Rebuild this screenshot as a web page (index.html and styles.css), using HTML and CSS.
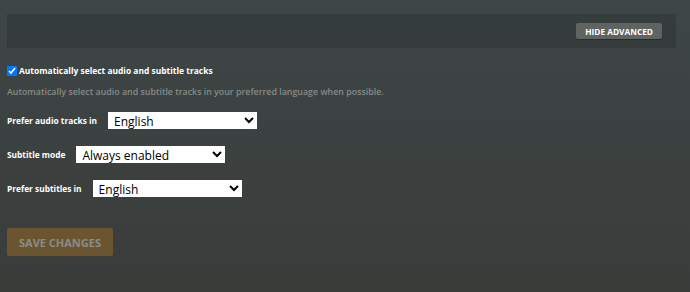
FILE: index.html
```html
<!DOCTYPE html>
<html lang="en">
<head>
  <meta charset="UTF-8" />
  <title>Language settings</title>
  <link rel="stylesheet" href="styles.css">
</head>
<body>
  <div class="page">
    <div class="toolbar">
      <button class="btn-advanced">HIDE ADVANCED</button>
    </div>

    <form class="settings">
      <label class="check-row">
        <input type="checkbox" checked />
        <span>Automatically select audio and subtitle tracks</span>
      </label>
      <p class="help">Automatically select audio and subtitle tracks in your preferred language when possible.</p>

      <div class="field">
        <label for="audio-lang">Prefer audio tracks in</label>
        <select id="audio-lang">
          <option>English</option>
        </select>
      </div>

      <div class="field">
        <label for="sub-mode">Subtitle mode</label>
        <select id="sub-mode">
          <option>Always enabled</option>
        </select>
      </div>

      <div class="field">
        <label for="sub-lang">Prefer subtitles in</label>
        <select id="sub-lang">
          <option>English</option>
        </select>
      </div>

      <button type="button" class="btn-save">SAVE CHANGES</button>
    </form>
  </div>
</body>
</html>
```

FILE: styles.css
```css
html, body {
  height: 100%;
}

body {
  margin: 0;
  background: linear-gradient(180deg, #3e4646 0%, #3b403f 60%, #3a3c3a 100%);
  color: #fff;
  font-family: "Open Sans", sans-serif;
  overflow: hidden;
}

.page {
  padding: 14px 14px 0 7px;
}

.toolbar {
  display: flex;
  justify-content: flex-end;
  align-items: center;
  height: 34px;
  padding: 0 14px 0 0;
  background: rgba(0, 0, 0, 0.12);
}

.btn-advanced {
  height: 16px;
  padding: 0 9px;
  border: none;
  border-radius: 2px;
  background: #5f6463;
  color: #fff;
  font-family: "Open Sans", sans-serif;
  font-weight: 700;
  font-size: 8.3px;
  box-shadow: 0 1px 1px rgba(0, 0, 0, 0.3);
}

.settings {
  display: flex;
  flex-direction: column;
  align-items: flex-start;
}

.check-row {
  display: flex;
  align-items: center;
  gap: 2px;
  margin-top: 17px;
  font-size: 8.45px;
  font-weight: 700;
}

.check-row input {
  width: 10px;
  height: 10px;
  margin: 0;
}

.help {
  margin: 10px 0 0;
  font-size: 8.85px;
  font-weight: 600;
  color: #868b89;
}

.field {
  display: flex;
  align-items: center;
  gap: 11px;
  margin-top: 14px;
  font-size: 8.35px;
  font-weight: 700;
}

.field + .field {
  margin-top: 17px;
}

.field select {
  width: 149px;
  height: 17px;
  padding: 0 2px;
  border: none;
  border-radius: 0;
  background: #fff;
  color: #000;
  font-family: "Open Sans", sans-serif;
  font-size: 12px;
}

.btn-save {
  margin-top: 31px;
  width: 106px;
  height: 28px;
  border: none;
  border-radius: 2px;
  background: #6b5530;
  color: #8b8c89;
  font-family: "Open Sans", sans-serif;
  font-weight: 700;
  font-size: 11px;
}
```
